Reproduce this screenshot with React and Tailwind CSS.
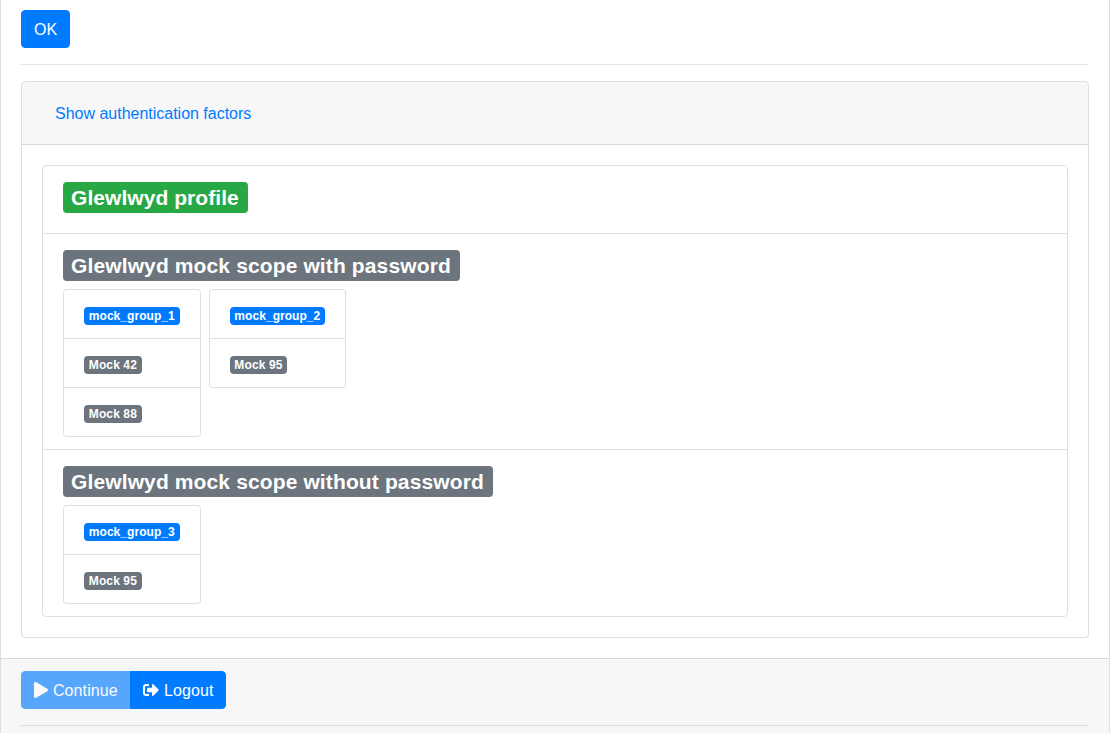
import React from "react";
import { FaPlay, FaSignOutAlt } from "react-icons/fa";

const line = "border-black/[0.125]";

function ScopeBadge({ color, children }) {
  return (
    <h3 className="mb-2 flex">
      <span className={`block h-[31px] rounded pl-2 pr-[8.8px] pt-[5px] text-[21px] font-bold leading-[21px] text-white ${color}`}>
        {children}
      </span>
    </h3>
  );
}

function Group({ name, schemes }) {
  return (
    <ul className={`rounded border ${line} bg-white`}>
      {[name, ...schemes].map((label, i) => (
        <li
          key={label}
          className={`flex px-5 pt-[17px] pb-[13px] ${i > 0 ? "border-t border-black/[0.125]" : ""}`}
        >
          <span
            className={`block h-[18px] rounded px-[4.8px] py-[3px] text-[12px] font-bold leading-[12px] text-white ${
              i === 0 ? "bg-[#007bff] tracking-[0.05px]" : "bg-[#6c757d] tracking-[0.11px]"
            }`}
          >
            {label}
          </span>
        </li>
      ))}
    </ul>
  );
}

function Scope({ title, color, groups = [], divided }) {
  return (
    <li className={`px-5 pt-4 pb-3 ${divided ? "border-t border-black/[0.125]" : ""}`}>
      <ScopeBadge color={color}>{title}</ScopeBadge>
      <div className="flex items-start gap-2">
        {groups.map((g) => (
          <Group key={g.name} {...g} />
        ))}
      </div>
    </li>
  );
}

export default function App() {
  return (
    <div className="h-[733px] overflow-hidden bg-white font-['Liberation_Sans',Arial,sans-serif] text-base text-[#212529]">
      <div className={`flex h-full w-[1110px] flex-col border-x ${line}`}>
        <main className="px-5 pt-[10px] pb-5">
          <button className="block h-[38px] rounded border border-[#007bff] bg-[#007bff] px-3 pt-[7px] pb-[5px] leading-6 text-white">
            OK
          </button>
          <hr className="my-4 border-t border-black/10" />
          <section className={`rounded border ${line}`}>
            <div className={`border-b ${line} rounded-t-[3px] bg-black/[0.03] px-5 py-3`}>
              <button className="block h-[38px] border border-transparent px-3 pt-[7px] pb-[5px] leading-6 tracking-[-0.01px] text-[#007bff]">
                Show authentication factors
              </button>
            </div>
            <div className="p-5">
              <ul className={`rounded border ${line}`}>
                <Scope title="Glewlwyd profile" color="bg-[#28a745] tracking-[0.06px]" />
                <Scope
                  divided
                  title="Glewlwyd mock scope with password"
                  color="bg-[#6c757d] tracking-[0.125px]"
                  groups={[
                    { name: "mock_group_1", schemes: ["Mock 42", "Mock 88"] },
                    { name: "mock_group_2", schemes: ["Mock 95"] },
                  ]}
                />
                <Scope
                  divided
                  title="Glewlwyd mock scope without password"
                  color="bg-[#6c757d] tracking-[0.125px]"
                  groups={[{ name: "mock_group_3", schemes: ["Mock 95"] }]}
                />
              </ul>
            </div>
          </section>
        </main>
        <footer className={`grow border-t ${line} bg-black/[0.03] px-5 py-3`}>
          <div className="flex">
            <button
              disabled
              className="h-[38px] w-[110px] rounded-l border border-[#007bff] bg-[#007bff] pl-3 pt-[7px] pb-[5px] text-left leading-6 tracking-[0.1px] whitespace-nowrap text-white opacity-65"
            >
              <FaPlay className="mr-[0.4px] inline-block h-4 w-[14px] align-[-2px]" /> Continue
            </button>
            <button className="relative -ml-px h-[38px] w-24 rounded-r border border-[#007bff] bg-[#007bff] pl-3 pt-[7px] pb-[5px] text-left leading-6 tracking-[0.1px] whitespace-nowrap text-white">
              <FaSignOutAlt className="mr-[0.4px] inline-block h-4 w-4 align-[-2px]" /> Logout
            </button>
          </div>
          <hr className="mt-4 border-t border-black/10" />
        </footer>
      </div>
    </div>
  );
}
